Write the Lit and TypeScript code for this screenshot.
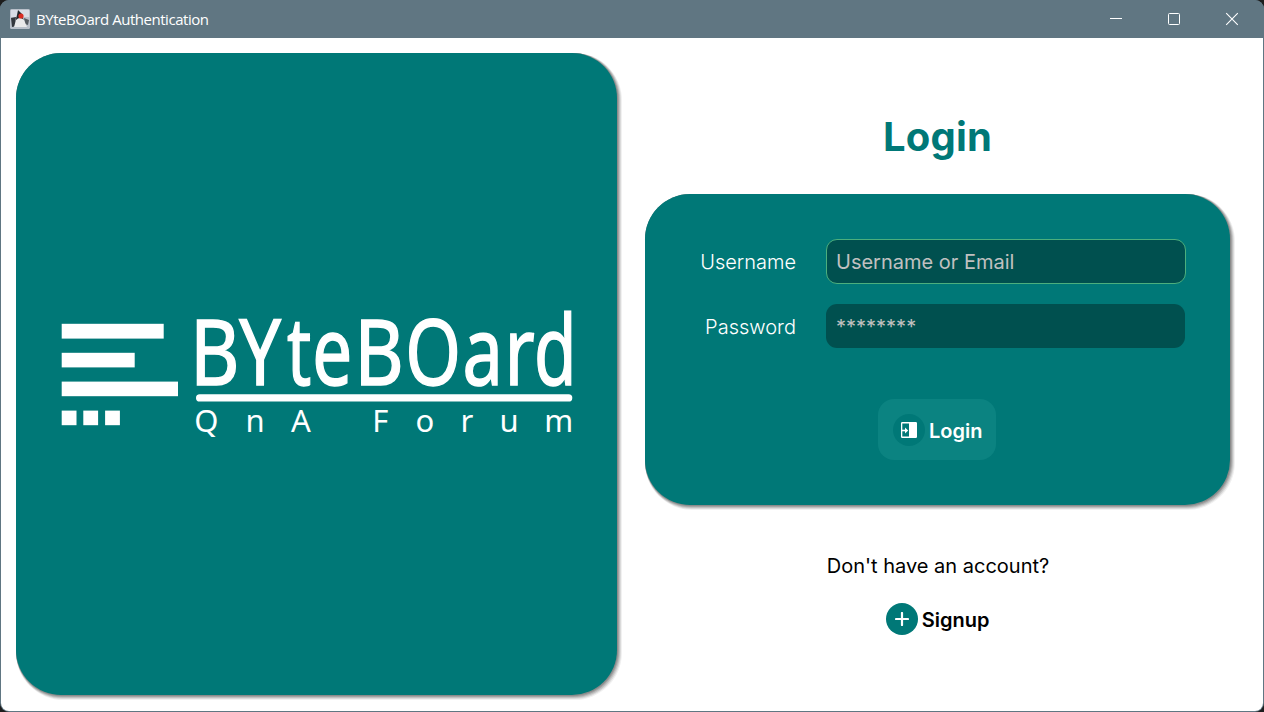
import { LitElement, html, css, svg } from "lit";
import { customElement } from "lit/decorators.js";

interface Glyph {
  ch: string;
  x: number;
  sx: number;
  sy?: number;
}

// Left edge and horizontal condensing of every wordmark letter.
const WORDMARK: Glyph[] = [
  { ch: "B", x: 190, sx: 0.833 },
  { ch: "Y", x: 239.2, sx: 0.806 },
  { ch: "t", x: 287, sx: 0.733, sy: 1.03 },
  { ch: "e", x: 312.3, sx: 0.775, sy: 1.04 },
  { ch: "B", x: 354.2, sx: 0.833 },
  { ch: "O", x: 405.3, sx: 0.78 },
  { ch: "a", x: 462.4, sx: 0.787, sy: 1.04 },
  { ch: "r", x: 504.4, sx: 0.8, sy: 1.04 },
  { ch: "d", x: 534.1, sx: 0.757, sy: 1.05 },
];

@customElement("brand-logo")
export class BrandLogo extends LitElement {
  static styles = css`
    :host { display: block; width: 512px; height: 130px; margin-top: 2px; }
    svg { display: block; overflow: visible; }
    text { font-family: "Noto Sans", "Open Sans", sans-serif; fill: #fff; }
    .word { font-size: 91.5px; stroke: #fff; stroke-width: 1.5px; }
    .sub { font-size: 31px; }
  `;
  render() {
    return html`<svg width="512" height="130" viewBox="61 310 512 130" fill="#fff">
      <rect x="61.7" y="323.8" width="102" height="14.8" />
      <rect x="61.7" y="352.8" width="73" height="14.6" />
      <rect x="61.7" y="381.6" width="116.3" height="14.6" />
      <rect x="61.7" y="410.6" width="14.8" height="14.6" />
      <rect x="83.3" y="410.6" width="14.8" height="14.6" />
      <rect x="105.1" y="410.6" width="14.8" height="14.6" />
      ${WORDMARK.map(
        (g) => svg`<text class="word" transform="translate(${g.x} 384.6) scale(${g.sx} ${g.sy ?? 1})">${g.ch}</text>`
      )}
      <rect x="196" y="394.2" width="376.3" height="7.4" rx="3.7" />
      <text class="sub" y="432.4" x="194.3 220 245.6 270 290.9 320 372.3 390 415.5 440 460.6 480 499.5 520 544.3">Q n A F o r u m</text>
    </svg>`;
  }
}

@customElement("title-bar")
export class TitleBar extends LitElement {
  static styles = css`
    :host {
      display: flex; align-items: center; height: 38px; padding-left: 10px;
      background: #607682; color: #fff; flex: none;
      font: 15px/20px "Open Sans", "Noto Sans", sans-serif;
    }
    .title { margin-left: 6px; flex: 1; letter-spacing: -0.46px; white-space: nowrap; }
    .controls { display: flex; }
    .control { width: 58px; height: 38px; display: grid; place-items: center; }
    .last { width: 62px; padding-right: 2px; box-sizing: border-box; }
    svg { display: block; }
  `;
  render() {
    return html`
      <svg width="20" height="20" viewBox="0 0 20 20">
        <rect width="20" height="20" rx="1.5" fill="#b9c0ca" />
        <rect x="1" y="1" width="18" height="7" fill="#d8dce5" />
        <path d="M8 1l4 4 2 8-4-2-5 3 2-8z" fill="#22262b" />
        <path d="M1 9l5-1-1 6 2 3-5 1z" fill="#33373d" />
        <path d="M14 9l5 2-1 5-3-1z" fill="#555b61" />
        <path d="M6 11q4-4 8 0l3 7H4z" fill="#e9e9ea" />
        <circle cx="11" cy="7" r="2.6" fill="#d92c24" />
      </svg>
      <span class="title">BYteBOard Authentication</span>
      <div class="controls">
        <div class="control"><svg width="14" height="14"><path d="M2 6.500h12" stroke="#fff" /></svg></div>
        <div class="control"><svg width="14" height="14"><rect x="2.500" y="1.500" width="11" height="11" rx="1" fill="none" stroke="#fff" /></svg></div>
        <div class="control last"><svg width="14" height="14"><path d="M1.2 1.2l11.6 11.6M12.8 1.2L1.2 12.8" stroke="#fff" stroke-width="1.1" /></svg></div>
      </div>`;
  }
}

@customElement("app-root")
export class AppRoot extends LitElement {
  static styles = css`
    :host { display: block; height: 712px; background: #1d1d1d; font-family: Inter, sans-serif; font-size: 20px; line-height: 24px; }
    * { box-sizing: border-box; }
    .window { height: 712px; display: flex; flex-direction: column; border-radius: 9px; overflow: hidden; background: #607682; }
    .body { flex: 1; margin: 0 1px 1px; background: #fff; border-radius: 0 0 8px 8px; display: flex; padding: 15px 33px 16px 15px; gap: 28px; }
    .card {
      background: #007877;
      border-radius: 45px;
      box-shadow: 0.5px 0.5px 0 0.5px #8b8b8b, 1px 1px 0 1px #a3a3a3, 1.5px 1.5px 0 1.5px #c0c0c0, 2px 2px 0 2px #dadada, 2.5px 2.5px 0 2.5px #f1f1f1;
    }
    .brand { width: 601px; display: flex; align-items: center; padding-left: 45px; }
    .side { width: 585px; display: flex; flex-direction: column; align-items: center; }
    h1 { margin: 59px 0 33px; font-size: 40px; line-height: 49px; font-weight: 700; color: #007877; letter-spacing: 0.2px; }
    .form { width: 585px; height: 311px; padding: 45px 44px 0 0; display: flex; flex-direction: column; align-items: flex-end; color: #fff; }
    .row { display: flex; align-items: center; height: 45px; margin-bottom: 20px; }
    .label { margin-right: 30px; font-weight: 360; }
    .field { width: 360px; height: 45px; border-radius: 11px; background: #00504f; border: 1px solid #4caf7d; padding: 1px 9px 0; line-height: 43px; color: #c0c0c0; font-weight: 370; }
    .plain { width: 359px; height: 44px; border: 0; padding: 2px 10px 0; margin: 0 1px 1px 0; }
    .login { align-self: center; margin: 30px 0 0 43px; width: 118px; height: 61px; border-radius: 16px; background: #0b8381; display: flex; align-items: center; padding-left: 15px; font-weight: 600; }
    .badge { width: 32px; height: 32px; border-radius: 50%; background: #007877; display: grid; place-items: center; margin-right: 4px; flex: none; }
    .text { padding-top: 2px; }
    .ask { margin-top: 49px; color: #000; font-weight: 390; padding-left: 1px; }
    .signup { margin-top: 25px; display: flex; align-items: center; font-weight: 600; color: #000; }
    svg { display: block; }
  `;
  render() {
    return html`
      <div class="window">
        <title-bar></title-bar>
        <div class="body">
          <div class="card brand"><brand-logo></brand-logo></div>
          <div class="side">
            <h1>Login</h1>
            <div class="card form">
              <div class="row"><span class="label">Username</span><div class="field">Username or Email</div></div>
              <div class="row"><span class="label">Password</span><div class="field plain">********</div></div>
              <div class="login">
                <span class="badge"><svg width="16" height="16" viewBox="0 0 16 16">
                  <path fill="#fff" fill-rule="evenodd" d="M1.2 0h13.600Q16 0 16 1.200v13.600Q16 16 14.800 16H1.200Q0 16 0 14.800V1.200Q0 0 1.200 0zM1.300 1.500v13H8v-13z" />
                  <path d="M0 8.500h5" stroke="#fff" stroke-width="1.600" />
                  <path d="M4 5.500L7.200 8.500 4 11.500z" fill="#fff" />
                </svg></span>
                <span class="text">Login</span>
              </div>
            </div>
            <div class="ask">Don't have an account?</div>
            <div class="signup">
              <span class="badge"><svg width="14" height="14"><path d="M7 1v12M1 7h12" stroke="#fff" stroke-width="2.200" stroke-linecap="round" /></svg></span>
              <span class="text">Signup</span>
            </div>
          </div>
        </div>
      </div>`;
  }
}
